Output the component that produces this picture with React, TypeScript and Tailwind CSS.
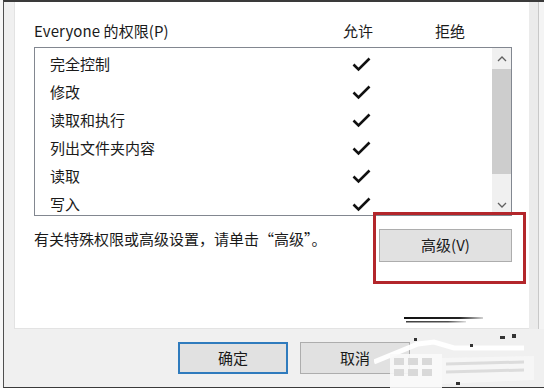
import React from 'react'

const rows = ['完全控制', '修改', '读取和执行', '列出文件夹内容', '读取', '写入']

function Check() {
  return (
    <svg width="19" height="15" viewBox="0 0 19 15">
      <path d="M1.5 7.5 L6.5 12.5 L17.5 1.5" fill="none" stroke="#111" strokeWidth="2.6" />
    </svg>
  )
}

function Chevron({ up }: { up?: boolean }) {
  return (
    <svg width="10" height="6" viewBox="0 0 10 6">
      <path d={up ? 'M1 5 L5 1 L9 5' : 'M1 1 L5 5 L9 1'} fill="none" stroke="#606060" strokeWidth="1.3" />
    </svg>
  )
}

export default function App() {
  return (
    <div
      className="w-[544px] h-[388px] overflow-hidden bg-[#f7f7f7] pl-[3px] text-[#1a1a1a]"
      style={{ fontFamily: '"Noto Sans CJK SC", "Noto Sans", sans-serif' }}
    >
      <div className="relative h-full flex flex-col border-l border-t-2 border-l-[#505050] border-t-[#3a3a3a] border-b border-b-[#3a3a3a] bg-[#f0f0f0]">
        <div className="flex">
          {/* left margin */}
          <div className="w-[10px] shrink-0" />
          {/* white panel */}
          <div className="relative w-[515px] h-[327px] bg-white border-l border-b border-[#e3e3e3] pt-[17px] pl-[19px]">
            <div className="flex items-center h-[22px] text-[15px] leading-none">
              <div className="w-[294px] tracking-[0.1px]">Everyone 的权限(P)</div>
              <div className="w-[60px] text-center">允许</div>
              <div className="w-[32px]" />
              <div className="w-[60px] text-center">拒绝</div>
            </div>
            <div className="mt-[6px] w-[478px] h-[169px] border border-[#828790] flex overflow-hidden">
              <div className="flex-1 pt-[2px]">
                {rows.map(r => (
                  <div key={r} className="flex items-center h-[28px] text-[15px]">
                    <div className="w-[296px] pl-[15px]">{r}</div>
                    <div className="w-[60px] flex justify-center">
                      <Check />
                    </div>
                  </div>
                ))}
              </div>
              <div className="w-[19px] bg-[#f0f0f0] flex flex-col">
                <div className="h-[21px] flex items-center justify-center">
                  <Chevron up />
                </div>
                <div className="h-[105px] bg-[#cdcdcd]" />
                <div className="flex-1" />
                <div className="h-[21px] flex items-center justify-center">
                  <Chevron />
                </div>
              </div>
            </div>
            <div className="w-[478px] mt-[13px] flex justify-between items-start">
              <div className="text-[15px] leading-[20px]">有关特殊权限或高级设置，请单击“高级”。</div>
              <button className="w-[133px] h-[33px] bg-[#e1e1e1] border border-[#adadad] text-[15px]">高级(V)</button>
            </div>
            {/* red annotation box */}
            <div className="absolute left-[358px] top-[210px] w-[153px] h-[72px] border-[3px] border-[#b3262b]" />
            {/* stray strokes */}
            <svg className="absolute left-[389px] top-[314px]" width="82" height="8" viewBox="0 0 82 8">
              <defs>
                <linearGradient id="ln" x1="0" x2="1">
                  <stop offset="0" stopColor="#111" />
                  <stop offset="0.7" stopColor="#222" />
                  <stop offset="1" stopColor="#222" stopOpacity="0.2" />
                </linearGradient>
              </defs>
              <rect x="0" y="1" width="79" height="2" fill="url(#ln)" />
              <rect x="2" y="5" width="60" height="1.5" fill="url(#ln)" opacity="0.8" />
            </svg>
          </div>
          {/* right strip */}
          <div className="w-[15px] h-[327px] flex">
            <div className="w-[9px] bg-[#ebebeb]" />
            <div className="w-[1px] bg-[#c8c8c8]" />
            <div className="flex-1 bg-[#f4f4f4]" />
          </div>
        </div>
        {/* footer */}
        <div className="flex-1 flex pt-[13px] pl-[174px] gap-[12px]">
          <button className="w-[110px] h-[32px] bg-[#e1e1e1] border-2 border-[#2f7bbd] text-[15px]">确定</button>
          <button className="w-[110px] h-[32px] bg-[#e1e1e1] border border-[#adadad] text-[15px]">取消</button>
        </div>
        {/* watermark */}
        <svg className="absolute left-[370px] top-[326px]" width="171" height="60" viewBox="0 0 171 60">
          <path d="M0 34 L44 16 L60 14 L80 20 L150 20" fill="none" stroke="#fff" strokeWidth="5" opacity="0.95" />
          <rect x="16" y="26" width="52" height="34" fill="#fafafa" opacity="0.9" />
          <g fill="#d9d9d9">
            <rect x="20" y="30" width="10" height="7" />
            <rect x="34" y="30" width="10" height="7" />
            <rect x="48" y="30" width="10" height="7" />
            <rect x="20" y="41" width="10" height="7" />
            <rect x="34" y="41" width="10" height="7" />
            <rect x="48" y="41" width="10" height="7" />
          </g>
          <path d="M68 30 L160 28 L160 52 L68 56 Z" fill="#f7f7f7" opacity="0.85" />
          <path d="M72 36 L150 34 M72 44 L150 42" stroke="#dcdcdc" strokeWidth="3" />
          <g fill="#333">
            <rect x="40" y="10" width="3" height="3" />
            <rect x="96" y="16" width="3" height="3" />
            <rect x="126" y="8" width="5" height="3" />
            <rect x="138" y="6" width="4" height="4" />
            <rect x="82" y="54" width="4" height="3" />
          </g>
        </svg>
      </div>
    </div>
  )
}
